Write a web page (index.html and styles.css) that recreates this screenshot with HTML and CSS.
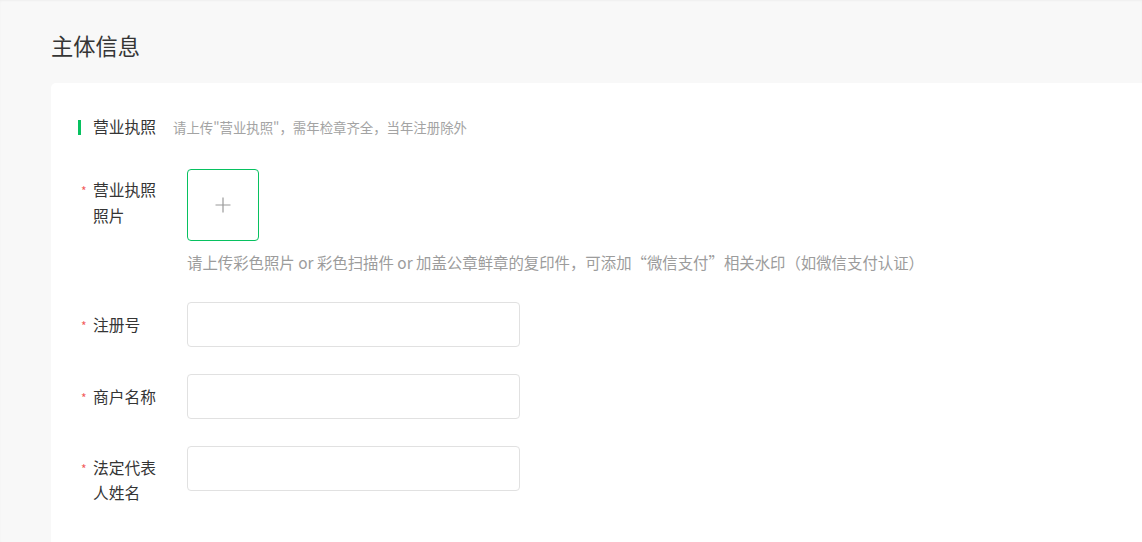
FILE: index.html
```html
<!DOCTYPE html>
<html lang="zh-CN">
<head>
<meta charset="utf-8">
<title>主体信息</title>
<link rel="stylesheet" href="styles.css">
</head>
<body>
<div class="page">
  <h1 class="page-title">主体信息</h1>
  <div class="card">
    <div class="section-head">
      <span class="section-bar"></span>
      <span class="section-title">营业执照</span>
      <span class="section-hint">请上传"营业执照"，需年检章齐全，当年注册除外</span>
    </div>
    <div class="form">
      <div class="row row-upload">
        <div class="label"><span class="star">*</span><span class="label-text">营业执照照片</span></div>
        <div class="control">
          <div class="upload">
            <svg width="16" height="16" viewBox="0 0 16 16"><path d="M8 0.5V15.5M0.5 8H15.5" stroke="#9a9a9a" stroke-width="1.2" fill="none"/></svg>
          </div>
          <div class="help">请上传彩色照片 or 彩色扫描件 or 加盖公章鲜章的复印件，可添加“微信支付”相关水印（如微信支付认证）</div>
        </div>
      </div>
      <div class="row">
        <div class="label"><span class="star">*</span><span class="label-text">注册号</span></div>
        <div class="control"><input class="input" type="text"></div>
      </div>
      <div class="row">
        <div class="label"><span class="star">*</span><span class="label-text">商户名称</span></div>
        <div class="control"><input class="input" type="text"></div>
      </div>
      <div class="row row-two">
        <div class="label"><span class="star">*</span><span class="label-text">法定代表人姓名</span></div>
        <div class="control"><input class="input" type="text"></div>
      </div>
    </div>
  </div>
</div>
</body>
</html>
```
FILE: styles.css
```css
html, body {
  margin: 0;
  padding: 0;
  height: 100%;
  overflow: hidden;
}
body {
  background: #f8f8f8;
  font-family: "Noto Sans CJK SC", "Noto Sans", sans-serif;
  color: #353535;
  box-shadow: inset 0 1px 2px rgba(0, 0, 0, 0.04);
}
.page {
  padding-left: 51px;
}
.page-title {
  margin: 0;
  padding-top: 30px;
  height: 30px;
  line-height: 30px;
  font-size: 22.25px;
  font-weight: 400;
  color: #353535;
  margin-bottom: 23px;
}
.card {
  background: #fff;
  border-radius: 5px;
  margin-right: -8px;
  padding: 32px 27px 60px 27px;
  min-height: 500px;
}
.section-head {
  display: flex;
  align-items: center;
  height: 24px;
  line-height: 24px;
}
.section-bar {
  width: 3px;
  height: 15px;
  background: #07c160;
  margin-right: 12px;
}
.section-title {
  font-size: 15.75px;
  color: #353535;
}
.section-hint {
  font-size: 13.4px;
  color: #a3a3a3;
  margin-left: 17px;
}
.form {
  margin-top: 30px;
  display: flex;
  flex-direction: column;
  gap: 27px;
}
.row {
  display: flex;
  align-items: flex-start;
}
.label {
  width: 109px;
  flex: none;
  display: flex;
  padding-top: 10px;
  line-height: 26px;
  font-size: 15.75px;
  color: #353535;
}
.row-upload .label {
  padding-top: 8px;
}
.row-two .label {
  padding-top: 9px;
  line-height: 25px;
}
.star {
  width: 12px;
  padding-left: 3px;
  color: #f25d5d;
  font-size: 12px;
  line-height: 28px;
}
.label-text {
  width: 64px;
}
.control {
  display: flex;
  flex-direction: column;
}
.upload {
  width: 70px;
  height: 70px;
  border: 1px solid #07c160;
  border-radius: 4px;
  display: flex;
  align-items: center;
  justify-content: center;
}
.help {
  margin-top: 9px;
  line-height: 24px;
  padding-bottom: 1px;
  font-size: 15.4px;
  color: #9c9c9c;
  white-space: nowrap;
}
.input {
  box-sizing: border-box;
  width: 333px;
  height: 45px;
  border: 1px solid #e1e1e1;
  border-radius: 4px;
  background: #fff;
  margin: 0;
  padding: 0 12px;
  font: inherit;
  outline: none;
}
```
